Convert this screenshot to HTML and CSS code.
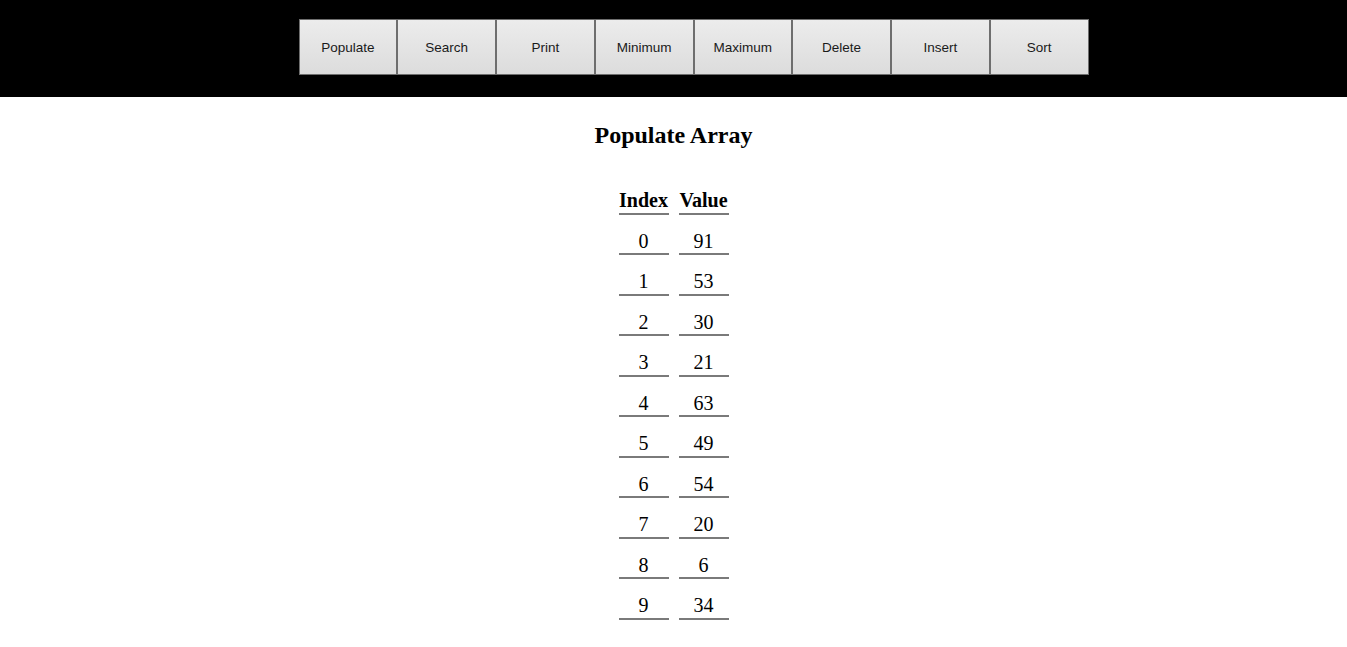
FILE: index.html
```html
<!DOCTYPE html>
<html>
<head>
<meta charset="utf-8">
<title>Array</title>
<link rel="stylesheet" href="styles.css">
</head>
<body>
<header class="topbar">
  <ul class="menu">
    <li><button class="btn">Populate</button></li>
    <li><button class="btn">Search</button></li>
    <li><button class="btn">Print</button></li>
    <li><button class="btn">Minimum</button></li>
    <li><button class="btn">Maximum</button></li>
    <li><button class="btn">Delete</button></li>
    <li><button class="btn">Insert</button></li>
    <li><button class="btn">Sort</button></li>
  </ul>
</header>
<main class="content">
  <h2 class="title">Populate Array</h2>
  <table class="arr">
    <thead>
      <tr><th>Index</th><th>Value</th></tr>
    </thead>
    <tbody>
      <tr><td>0</td><td>91</td></tr>
      <tr><td>1</td><td>53</td></tr>
      <tr><td>2</td><td>30</td></tr>
      <tr><td>3</td><td>21</td></tr>
      <tr><td>4</td><td>63</td></tr>
      <tr><td>5</td><td>49</td></tr>
      <tr><td>6</td><td>54</td></tr>
      <tr><td>7</td><td>20</td></tr>
      <tr><td>8</td><td>6</td></tr>
      <tr><td>9</td><td>34</td></tr>
    </tbody>
  </table>
</main>
</body>
</html>
```

FILE: styles.css
```css
html, body {
  margin: 0;
  padding: 0;
  background: #fff;
  font-family: "Liberation Serif", "Times New Roman", serif;
  color: #000;
}
.topbar {
  background: #000;
  padding: 19px 0 22px;
}
.menu {
  list-style: none;
  margin: 0;
  padding: 0 0 0 40px;
  display: flex;
  justify-content: center;
}
.menu li {
  margin: 0;
}
.btn {
  display: block;
  width: 98.75px;
  height: 56px;
  margin: 0;
  padding: 0;
  border: 1px solid #6e6e6e;
  background: linear-gradient(to bottom, #ececec, #dcdcdc);
  font-family: "Liberation Sans", Arial, sans-serif;
  font-size: 13.5px;
  color: #1a1a1a;
}
.content {
  display: flex;
  flex-direction: column;
  align-items: center;
}
.title {
  margin: 25px 0 25px;
  font-size: 24px;
  font-weight: bold;
  line-height: normal;
}
.arr {
  border-collapse: separate;
  border-spacing: 10px;
  margin: 0;
  font-size: 20px;
}
.arr th, .arr td {
  width: 50px;
  padding: 5px 0 1px;
  line-height: 22.5px;
  text-align: center;
  border-bottom: 2px solid #7a7a7a;
}
.arr th {
  font-weight: bold;
}
.arr td {
  font-weight: normal;
}
```
